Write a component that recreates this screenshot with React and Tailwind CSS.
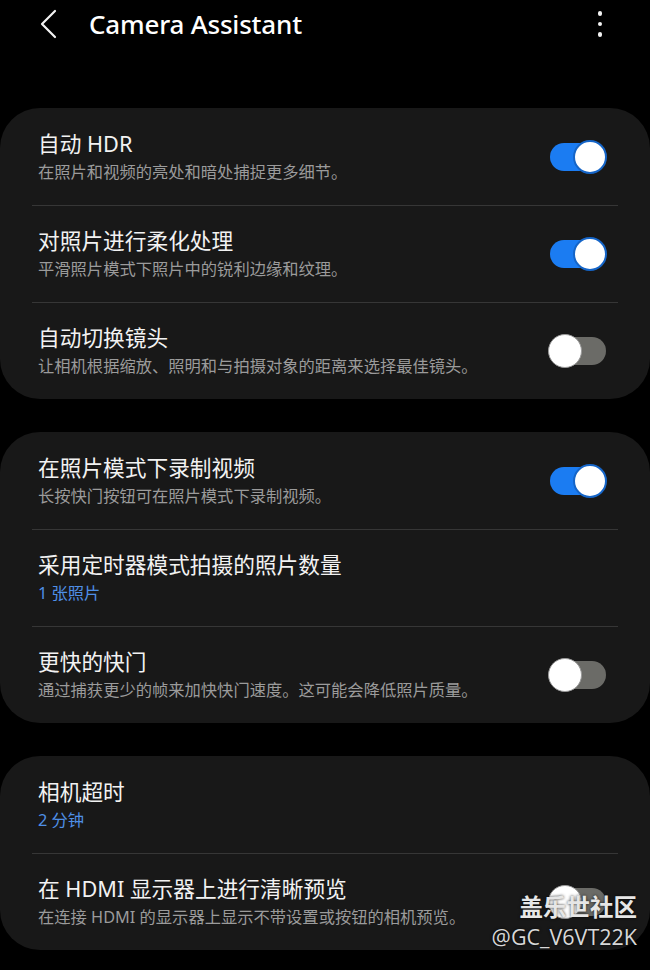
import React from 'react';

const groups = [
  [
    { title: '自动 HDR', sub: '在照片和视频的亮处和暗处捕捉更多细节。', toggle: true },
    { title: '对照片进行柔化处理', sub: '平滑照片模式下照片中的锐利边缘和纹理。', toggle: true },
    { title: '自动切换镜头', sub: '让相机根据缩放、照明和与拍摄对象的距离来选择最佳镜头。', toggle: false },
  ],
  [
    { title: '在照片模式下录制视频', sub: '长按快门按钮可在照片模式下录制视频。', toggle: true },
    { title: '采用定时器模式拍摄的照片数量', value: '1 张照片' },
    { title: '更快的快门', sub: '通过捕获更少的帧来加快快门速度。这可能会降低照片质量。', toggle: false },
  ],
  [
    { title: '相机超时', value: '2 分钟' },
    { title: '在 HDMI 显示器上进行清晰预览', sub: '在连接 HDMI 的显示器上显示不带设置或按钮的相机预览。', toggle: false },
  ],
];

const Switch = ({ on }) => (
  <div className="relative w-[59px] h-[34px] flex items-center shrink-0">
    <div className={`absolute left-[2px] right-[1px] h-[28px] rounded-full ${on ? 'bg-[#1b7cf2]' : 'bg-[#6b6b67]'}`} />
    <div
      className={`absolute top-0 w-[34px] h-[34px] rounded-full bg-white ${on ? 'right-0 border-2 border-[#1565c8]' : 'left-0 border border-[#9a9a9a]'}`}
    />
  </div>
);

const Row = ({ item, first, last }) => (
  <div>
    <div className={`${first ? 'h-[97px]' : 'h-[96px]'} flex items-center pl-[38px] pr-[43px]`}>
      <div className="flex-1 min-w-0">
        <div className="text-[21.7px] leading-[28px] text-[#f2f2f2]">{item.title}</div>
        {item.sub && <div className="text-[16.3px] leading-[24px] text-[#9b9b9b] mt-[2px]">{item.sub}</div>}
        {item.value && <div className="text-[16.3px] leading-[24px] text-[#4f8fe6] mt-[2px]">{item.value}</div>}
      </div>
      {item.toggle !== undefined && <Switch on={item.toggle} />}
    </div>
    {!last && <div className="mx-[32px] h-px bg-[#363636]" />}
  </div>
);

export default function App() {
  return (
    <div
      className="relative w-[650px] h-[970px] bg-black overflow-hidden"
      style={{ fontFamily: '"Noto Sans", "Noto Sans CJK SC", sans-serif' }}
    >
      {/* Header */}
      <div className="h-[108px] flex items-start pt-[1px]">
        <div className="flex items-center h-[46px] w-full">
          <svg width="20" height="30" viewBox="0 0 20 30" className="ml-[38px]">
            <path d="M17 2 L4 15 L17 28" fill="none" stroke="#f2f2f2" strokeWidth="2.2" strokeLinecap="round" strokeLinejoin="round" />
          </svg>
          <div className="ml-[31px] text-[26px] font-medium text-white tracking-[-0.2px]">Camera Assistant</div>
          <div className="ml-auto mr-[48px] flex flex-col gap-[6px] items-center">
            <span className="w-[4.5px] h-[4.5px] rounded-full bg-[#f2f2f2]" />
            <span className="w-[4.5px] h-[4.5px] rounded-full bg-[#f2f2f2]" />
            <span className="w-[4.5px] h-[4.5px] rounded-full bg-[#f2f2f2]" />
          </div>
        </div>
      </div>

      <div className="flex flex-col gap-[33px]">
        {groups.map((g, gi) => (
          <div key={gi} className="bg-[#181818] rounded-[40px]">
            {g.map((item, i) => (
              <Row key={i} item={item} first={i === 0} last={i === g.length - 1} />
            ))}
          </div>
        ))}
      </div>

      {/* Watermark */}
      <div className="absolute right-[13px] top-[892px] flex flex-col items-end [text-shadow:0_0_3px_rgba(0,0,0,0.8)]">
        <div className="text-[23.5px] leading-[30px] font-bold text-[#e6e6e6]">盖乐世社区</div>
        <div className="text-[21.5px] leading-[29px] text-[#d8d8d8]" style={{ fontFamily: '"Open Sans", sans-serif' }}>@GC_V6VT22K</div>
      </div>
    </div>
  );
}
